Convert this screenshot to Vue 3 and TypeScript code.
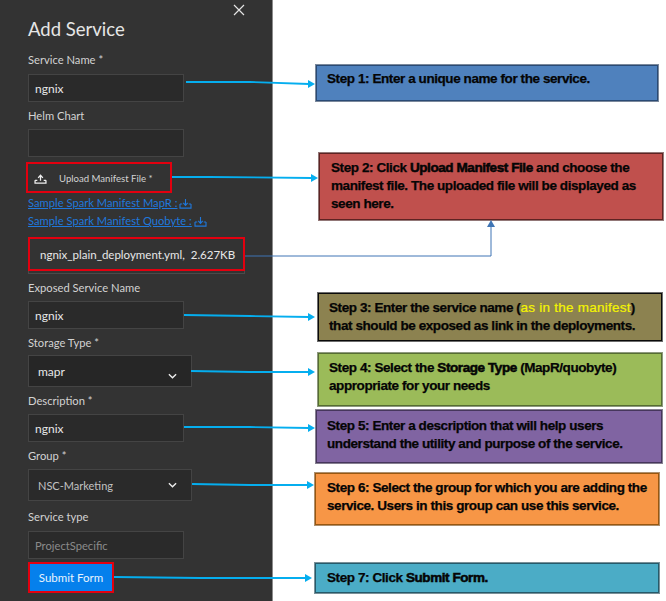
<script setup lang="ts">
type Connector = { points: string; head: string; color: string; width: number }

const connectors: Connector[] = [
  { points: '186,82 250,82 309,84', head: '315,84 308,80 308,88', color: '#05aeef', width: 1.8 },
  { points: '172,177 210,177 312,178', head: '318,178 311,174 311,182', color: '#05aeef', width: 1.8 },
  { points: '245,256 491,256 491,227', head: '491,220 487,227 495,227', color: '#3f75b5', width: 1 },
  { points: '184,315 250,316 309,317', head: '315,317 308,313 308,321', color: '#05aeef', width: 1.8 },
  { points: '191,371 250,372 309,372', head: '315,372 308,368 308,376', color: '#05aeef', width: 1.8 },
  { points: '184,427 250,427 309,428', head: '315,428 308,424 308,432', color: '#05aeef', width: 1.8 },
  { points: '192,484 250,485 308,485', head: '314,485 307,481 307,489', color: '#05aeef', width: 1.8 },
  { points: '114,577 200,578 306,578', head: '312,578 305,574 305,582', color: '#05aeef', width: 1.8 },
]
</script>

<template>
  <div class="page">
    <section class="panel">
      <svg class="close" viewBox="0 0 12 12" width="12" height="12">
        <path d="M1 1l10 10M11 1L1 11" stroke="#e4e4e4" stroke-width="1.2" fill="none" />
      </svg>
      <h1 class="title">Add Service</h1>

      <label class="label first">Service Name *</label>
      <div class="field">ngnix</div>

      <label class="label">Helm Chart</label>
      <div class="field"></div>

      <button class="upload">
        <svg viewBox="0 0 14 11" width="13" height="10">
          <path
            d="M1 7h2.5M10.5 7H13M1 7v3h12V7M7 7.5V2M4.4 4.2L7 1.4l2.6 2.8"
            stroke="#efefef"
            stroke-width="1.4"
            fill="none"
          />
        </svg>
        <span>Upload Manifest File *</span>
      </button>

      <a class="sample first-link">
        <span class="sample-text">Sample Spark Manifest MapR :</span>
        <svg viewBox="0 0 14 12" width="13" height="11">
          <path
            d="M1 6.5h2.5M10.5 6.5H13M1 6.5V11h12V6.5M7 1v6.5M4.6 5.4L7 8l2.4-2.6"
            stroke="#1f78dc"
            stroke-width="1.2"
            fill="none"
          />
        </svg>
      </a>
      <a class="sample">
        <span class="sample-text">Sample Spark Manifest Quobyte :</span>
        <svg viewBox="0 0 14 12" width="13" height="11">
          <path
            d="M1 6.5h2.5M10.5 6.5H13M1 6.5V11h12V6.5M7 1v6.5M4.6 5.4L7 8l2.4-2.6"
            stroke="#1f78dc"
            stroke-width="1.2"
            fill="none"
          />
        </svg>
      </a>

      <div class="file">ngnix_plain_deployment.yml,&nbsp; 2.627KB</div>

      <label class="label after-file">Exposed Service Name</label>
      <div class="field">ngnix</div>

      <label class="label">Storage Type *</label>
      <div class="select storage">
        <span>mapr</span>
        <svg class="chev low" viewBox="0 0 10 6" width="9" height="6">
          <path d="M1 1l4 4 4-4" stroke="#efefef" stroke-width="1.5" fill="none" />
        </svg>
      </div>

      <label class="label">Description *</label>
      <div class="field">ngnix</div>

      <label class="label group">Group *</label>
      <div class="select muted">
        <span>NSC-Marketing</span>
        <svg class="chev" viewBox="0 0 10 6" width="9" height="6">
          <path d="M1 1l4 4 4-4" stroke="#efefef" stroke-width="1.5" fill="none" />
        </svg>
      </div>

      <label class="label service-type">Service type</label>
      <div class="field disabled">ProjectSpecific</div>

      <button class="submit">Submit Form</button>
    </section>

    <section class="steps">
      <div class="step s1">Step 1: Enter a unique name for the service.</div>
      <div class="step s2">
        Step 2: Click <strong>Upload Manifest File</strong> and choose the manifest file. The uploaded file will be
        displayed as seen here.
      </div>
      <div class="step s3">
        Step 3: Enter the service name (<span class="hl">as in the manifest</span>) that should be exposed as link in
        the deployments.
      </div>
      <div class="step s4">
        Step 4: Select the <strong>Storage Type</strong> (MapR/quobyte) appropriate for your needs
      </div>
      <div class="step s5">Step 5: Enter a description that will help users understand the utility and purpose of the service.</div>
      <div class="step s6">Step 6: Select the group for which you are adding the service. Users in this group can use this service.</div>
      <div class="step s7">Step 7: Click <strong>Submit Form.</strong></div>
    </section>

    <!-- annotation arrows drawn over the screenshot -->
    <svg class="arrows" viewBox="0 0 666 601" width="666" height="601">
      <g v-for="(c, i) in connectors" :key="i">
        <polyline :points="c.points" fill="none" :stroke="c.color" :stroke-width="c.width" />
        <polygon :points="c.head" :fill="c.color" />
      </g>
    </svg>
  </div>
</template>

<style scoped>
.page {
  position: relative;
  width: 666px;
  height: 601px;
  display: flex;
  background: #ffffff;
  overflow: hidden;
  font-family: Lato, "Open Sans", sans-serif;
}

.panel {
  position: relative;
  width: 273px;
  height: 601px;
  box-sizing: border-box;
  padding: 17px 0 0 28px;
  background: #333333;
  border-right: 1px solid #8c8c8c;
  flex-shrink: 0;
  color: #d8d8d8;
}

.close {
  position: absolute;
  top: 4px;
  left: 233px;
}

.title {
  margin: 0;
  font-size: 18.5px;
  line-height: 24px;
  font-weight: 400;
  color: #e6e6e6;
}

.label {
  display: block;
  font-size: 11.2px;
  line-height: 16px;
  height: 16px;
  margin-top: 6px;
  margin-bottom: 5px;
  color: #d2d2d2;
}

.label.first {
  margin-top: 11px;
  margin-bottom: 6px;
}

.field {
  box-sizing: border-box;
  width: 156px;
  height: 28px;
  padding-left: 6px;
  background: #2a2a2a;
  border: 1px solid #444444;
  font-size: 12px;
  line-height: 27px;
  color: #e8e8e8;
}

.field.disabled {
  font-size: 11.2px;
  color: #8a8a8a;
}

.upload {
  display: flex;
  align-items: center;
  box-sizing: border-box;
  width: 146px;
  height: 31px;
  margin: 5px 0 0 -2px;
  padding: 2px 0 0 6px;
  gap: 12px;
  background: #333333;
  border: 2px solid #e3000f;
  font-family: inherit;
  font-size: 9.6px;
  color: #d2d2d2;
}

.sample {
  display: flex;
  align-items: center;
  gap: 2px;
  height: 18px;
  font-size: 11.2px;
  line-height: 18px;
  color: #1f78dc;
}

.first-link {
  margin-top: 1px;
}

.sample-text {
  text-decoration: underline;
}

.file {
  box-sizing: border-box;
  width: 217px;
  height: 34px;
  margin-top: 7px;
  padding-left: 10px;
  border: 2px solid #e3000f;
  font-size: 11.5px;
  line-height: 31px;
  white-space: nowrap;
  color: #e8e8e8;
  box-shadow: 0 3px 0 -1px #333333, 0 3px 0 0 #4a4a4a;
}

.label.after-file {
  margin-top: 9px;
}

.select {
  display: flex;
  justify-content: space-between;
  align-items: center;
  box-sizing: border-box;
  width: 164px;
  height: 32px;
  margin-top: -1px;
  padding: 0 14px 0 9px;
  background: #262626;
  border: 1px solid #444444;
  font-size: 12px;
  color: #e8e8e8;
}

.select.muted {
  background: #2a2a2a;
  font-size: 11px;
  color: #c2c2c2;
}

.chev.low {
  margin-top: 9px;
}

.label.group {
  margin-bottom: 6px;
}

.label.service-type {
  margin-top: 8px;
  margin-bottom: 6px;
}

.submit {
  display: block;
  box-sizing: border-box;
  width: 86px;
  height: 31px;
  margin-top: 3px;
  padding: 0;
  background: #0580ec;
  border: 2px solid #e3000f;
  font-family: inherit;
  font-size: 11.5px;
  color: #e8f3fd;
}

.steps {
  flex: 1;
  display: flex;
  flex-direction: column;
  align-items: flex-start;
  font-family: "Liberation Sans", Arial, sans-serif;
}

.step {
  box-sizing: border-box;
  border: 2px solid;
  outline: 1px solid rgba(190, 190, 190, 0.55);
  outline-offset: -1px;
  font-size: 13.5px;
  line-height: 18px;
  font-weight: 700;
  letter-spacing: -0.42px;
  color: #050505;
  -webkit-text-stroke: 0.25px #050505;
}

.step strong {
  -webkit-text-stroke: 0.55px #050505;
}

.s1 {
  width: 344px;
  height: 38px;
  margin: 64px 0 0 42px;
  padding: 4px 6px 0 10px;
  background: #4f81bd;
  border-color: #2a4a74;
}

.s2 {
  width: 346px;
  height: 69px;
  margin: 50px 0 0 45px;
  padding: 5px 6px 0 11px;
  background: #c0504d;
  border-color: #5e2322;
}

.s3 {
  width: 346px;
  height: 50px;
  margin: 71px 0 0 44px;
  padding: 5px 20px 0 10px;
  background: #8c8250;
  border-color: #0a0a0a;
}

.hl {
  font-weight: 400;
  letter-spacing: 0.25px;
  color: #f5f500;
  -webkit-text-stroke: 0.2px #f5f500;
}

.s4 {
  width: 346px;
  height: 55px;
  margin: 10px 0 0 44px;
  padding: 5px 6px 0 10px;
  background: #9bbb59;
  border-color: #566d32;
}

.s5 {
  width: 348px;
  height: 55px;
  margin: 2px 0 0 42px;
  padding: 6px 6px 0 10px;
  background: #8064a2;
  border-color: #46365c;
}

.s6 {
  width: 346px;
  height: 54px;
  margin: 8px 0 0 41px;
  padding: 5px 6px 0 11px;
  background: #f79646;
  border-color: #985710;
}

.s7 {
  width: 346px;
  height: 32px;
  margin: 36px 0 0 41px;
  padding: 5px 6px 0 11px;
  background: #4bacc6;
  border-color: #265a6a;
}

.arrows {
  position: absolute;
  top: 0;
  left: 0;
  pointer-events: none;
}
</style>
